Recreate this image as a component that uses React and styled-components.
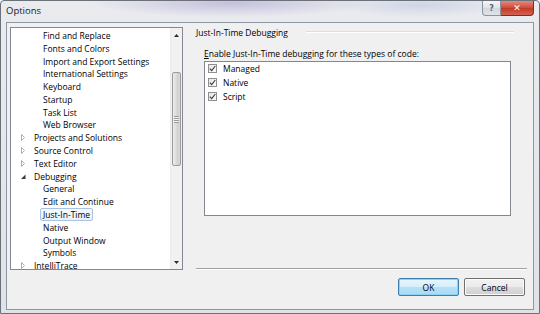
import React from 'react';
import styled, { createGlobalStyle } from 'styled-components';

const GlobalStyle = createGlobalStyle`
  html, body {
    margin: 0;
    padding: 0;
    background: #ffffff;
  }
  body {
    font-family: 'Open Sans', 'Noto Sans', sans-serif;
    font-size: 8.5px;
    color: #000;
  }
`;

const treeItems = [
  { label: 'Find and Replace', level: 2 },
  { label: 'Fonts and Colors', level: 2 },
  { label: 'Import and Export Settings', level: 2 },
  { label: 'International Settings', level: 2 },
  { label: 'Keyboard', level: 2 },
  { label: 'Startup', level: 2 },
  { label: 'Task List', level: 2 },
  { label: 'Web Browser', level: 2 },
  { label: 'Projects and Solutions', level: 1, toggle: 'closed' },
  { label: 'Source Control', level: 1, toggle: 'closed' },
  { label: 'Text Editor', level: 1, toggle: 'closed' },
  { label: 'Debugging', level: 1, toggle: 'open' },
  { label: 'General', level: 2 },
  { label: 'Edit and Continue', level: 2 },
  { label: 'Just-In-Time', level: 2, selected: true },
  { label: 'Native', level: 2 },
  { label: 'Output Window', level: 2 },
  { label: 'Symbols', level: 2 },
  { label: 'IntelliTrace', level: 1, toggle: 'closed' },
];

const codeTypes = ['Managed', 'Native', 'Script'];

const Window = styled.div`
  width: 540px;
  height: 314px;
  display: flex;
  flex-direction: column;
  box-sizing: border-box;
  border: 1px solid #6b7178;
  border-radius: 4px 4px 0 0;
  background:
    radial-gradient(ellipse 140px 14px at 230px 2px, rgba(150, 140, 200, 0.45), transparent),
    radial-gradient(ellipse 90px 12px at 420px 4px, rgba(170, 180, 215, 0.4), transparent),
    linear-gradient(#e9ebef, #dfe2e6);
  overflow: hidden;
`;

const TitleBar = styled.div`
  height: 21px;
  display: flex;
  align-items: flex-start;
  padding-left: 5px;
`;

const Title = styled.span`
  font-size: 9.5px;
  line-height: 20px;
  color: #1a1a1a;
`;

const CaptionButtons = styled.div`
  margin-left: auto;
  margin-right: 5px;
  display: flex;
`;

const CaptionButton = styled.div`
  height: 15px;
  width: ${p => (p.close ? '33px' : '19px')};
  box-sizing: border-box;
  border: 1px solid ${p => (p.close ? '#7c2d24' : '#8d949c')};
  border-top: none;
  border-radius: ${p => (p.close ? '0 0 4px 0' : '0 0 0 4px')};
  border-left-width: ${p => (p.close ? '0' : '1px')};
  background: ${p =>
    p.close
      ? 'linear-gradient(#e5897c, #cc4a3a 50%, #c13a2a 51%, #d4624f)'
      : 'linear-gradient(#f4f5f7, #dfe3e8 50%, #d2d7dd 51%, #e0e4e8)'};
  display: flex;
  align-items: center;
  justify-content: center;
  color: ${p => (p.close ? '#ffffff' : '#5b6570')};
  font-family: 'DejaVu Sans', sans-serif;
  font-size: ${p => (p.close ? '9px' : '8px')};
  font-weight: bold;
`;

const Client = styled.div`
  flex: 1;
  margin: 0 5px 3px 5px;
  border: 1px solid #8d98a4;
  background: #f0f0f0;
  display: flex;
  flex-direction: column;
  padding: 4px 8px 0 3px;
`;

const MainRow = styled.div`
  display: flex;
  height: 243px;
`;

const Tree = styled.div`
  width: 173px;
  box-sizing: border-box;
  border: 1px solid #828790;
  background: #ffffff;
  display: flex;
`;

const TreeList = styled.div`
  flex: 1;
  padding-top: 1px;
`;

const TreeRow = styled.div`
  height: 12.8px;
  display: flex;
  align-items: center;
  padding-left: ${p => (p.level === 2 ? '29px' : '9px')};
  white-space: nowrap;
`;

const Toggle = styled.svg`
  width: 6px;
  height: 7px;
  margin-right: 5px;
  flex: none;
`;

const TreeLabel = styled.span`
  line-height: 11px;
  padding: 0 2px;
  border: 1px solid ${p => (p.selected ? '#a9c4e2' : 'transparent')};
  border-radius: 2px;
  background: ${p => (p.selected ? 'linear-gradient(#f6f9fd, #e9f1fb)' : 'transparent')};
`;

const ScrollBar = styled.div`
  width: 11px;
  background: #f1f1f1;
  border-left: 1px solid #ececec;
  display: flex;
  flex-direction: column;
  align-items: center;
`;

const ArrowButton = styled.div`
  height: 14px;
  width: 100%;
  display: flex;
  align-items: center;
  justify-content: center;
`;

const Track = styled.div`
  flex: 1;
  width: 100%;
  padding-top: 30px;
  box-sizing: border-box;
`;

const Thumb = styled.div`
  height: 94px;
  margin: 0 1px;
  box-sizing: border-box;
  border: 1px solid #9b9b9b;
  border-radius: 2px;
  background: linear-gradient(90deg, #ececec, #dadada 50%, #cfcfcf 51%, #d8d8d8);
  display: flex;
  align-items: center;
  justify-content: center;
`;

const Grip = styled.div`
  width: 5px;
  height: 7px;
  background: repeating-linear-gradient(#9a9a9a 0 1px, #f4f4f4 1px 2px);
`;

const RightPane = styled.div`
  flex: 1;
  margin-left: 13px;
  display: flex;
  flex-direction: column;
`;

const Heading = styled.div`
  display: flex;
  align-items: center;
  height: 12px;
  margin-top: -1px;
  padding-right: 11px;
`;

const HeadingLine = styled.div`
  flex: 1;
  height: 1px;
  margin-left: 18px;
  background: #d5dfe5;
  border-bottom: 1px solid #ffffff;
`;

const Prompt = styled.div`
  margin: 10px 0 0 8px;
  line-height: 12px;
`;

const Accel = styled.span`
  text-decoration: underline;
`;

const ListBox = styled.div`
  margin: 1px 14px 0 8px;
  height: 155px;
  box-sizing: border-box;
  border: 1px solid #828790;
  background: #ffffff;
  padding: 0 0 0 3px;
`;

const CheckRow = styled.label`
  display: flex;
  align-items: center;
  height: 14px;
  &:first-child {
    margin-top: -1px;
  }
`;

const CheckBox = styled.span`
  width: 9px;
  height: 9px;
  box-sizing: border-box;
  border: 1px solid #8f8f8f;
  background: linear-gradient(135deg, #e6e6e6, #fbfbfb);
  display: flex;
  align-items: center;
  justify-content: center;
  margin-right: 6px;
`;

const Spacer = styled.div`
  flex: 1;
`;

const Separator = styled.div`
  height: 1px;
  background: #a0a0a0;
  border-bottom: 1px solid #ffffff;
  margin-right: -2px;
`;

const Footer = styled.div`
  display: flex;
  justify-content: flex-end;
  gap: 5px;
  margin-top: 8px;
`;

const Button = styled.button`
  width: 61px;
  height: 18px;
  box-sizing: border-box;
  padding: 0;
  font-family: inherit;
  font-size: 8.5px;
  color: #000;
  border-radius: 2px;
  border: 1px solid ${p => (p.primary ? '#3c7fb1' : '#707070')};
  background: ${p =>
    p.primary
      ? 'linear-gradient(#e8f6fd, #d3eefb 50%, #b6e0f7 51%, #a9daf5)'
      : 'linear-gradient(#f2f2f2, #ebebeb 50%, #dddddd 51%, #cfcfcf)'};
  box-shadow: ${p => (p.primary ? 'inset 0 0 0 1px #8fd0f3' : 'inset 0 0 0 1px #fcfcfc')};
`;

const TreeToggle = ({ state }) =>
  state === 'open' ? (
    <Toggle viewBox="0 0 6 7">
      <path d="M5.5 1.5 L5.5 6 L1 6 Z" fill="#3a3a3a" />
    </Toggle>
  ) : (
    <Toggle viewBox="0 0 6 7">
      <path d="M1.5 0.5 L4.5 3.5 L1.5 6.5 Z" fill="#ffffff" stroke="#a6a6a6" strokeWidth="0.9" />
    </Toggle>
  );

const Tick = () => (
  <svg width="7" height="7" viewBox="0 0 7 7">
    <path d="M0.8 3.6 L2.7 5.6 L6.3 1" fill="none" stroke="#3c3c3c" strokeWidth="1.1" />
  </svg>
);

const SmallArrow = ({ down }) => (
  <svg width="5" height="3" viewBox="0 0 5 3">
    <path d={down ? 'M0 0 L5 0 L2.5 3 Z' : 'M0 3 L5 3 L2.5 0 Z'} fill="#2b2b2b" />
  </svg>
);

const App = () => (
  <>
    <GlobalStyle />
    <Window>
      <TitleBar>
        <Title>Options</Title>
        <CaptionButtons>
          <CaptionButton>?</CaptionButton>
          <CaptionButton close>✕</CaptionButton>
        </CaptionButtons>
      </TitleBar>
      <Client>
        <MainRow>
          <Tree>
            <TreeList>
              {treeItems.map(item => (
                <TreeRow key={item.label} level={item.level}>
                  {item.toggle && <TreeToggle state={item.toggle} />}
                  <TreeLabel selected={item.selected}>{item.label}</TreeLabel>
                </TreeRow>
              ))}
            </TreeList>
            <ScrollBar>
              <ArrowButton>
                <SmallArrow />
              </ArrowButton>
              <Track>
                <Thumb>
                  <Grip />
                </Thumb>
              </Track>
              <ArrowButton>
                <SmallArrow down />
              </ArrowButton>
            </ScrollBar>
          </Tree>
          <RightPane>
            <Heading>
              <span>Just-In-Time Debugging</span>
              <HeadingLine />
            </Heading>
            <Prompt>
              <Accel>E</Accel>nable Just-In-Time debugging for these types of code:
            </Prompt>
            <ListBox>
              {codeTypes.map(type => (
                <CheckRow key={type}>
                  <CheckBox>
                    <Tick />
                  </CheckBox>
                  {type}
                </CheckRow>
              ))}
            </ListBox>
            <Spacer />
            <Separator />
          </RightPane>
        </MainRow>
        <Footer>
          <Button primary>OK</Button>
          <Button>Cancel</Button>
        </Footer>
      </Client>
    </Window>
  </>
);

export default App;
